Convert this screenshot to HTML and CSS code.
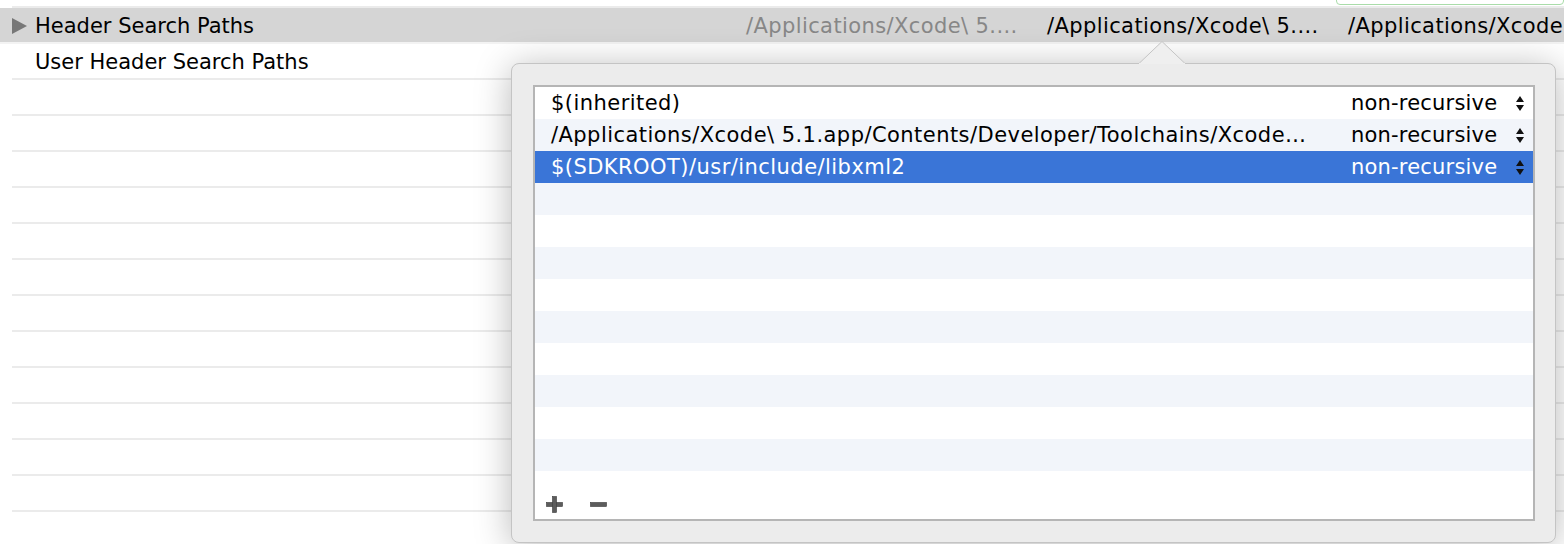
FILE: index.html
```html
<!DOCTYPE html>
<html lang="en">
<head>
    <meta charset="UTF-8">
    <title>Build Settings - Search Paths</title>
    <link rel="stylesheet" href="styles.css">
</head>
<body>
    <div class="settings">
        <div class="setting-row prev-row">
            <div class="filter-field"></div>
        </div>
        <div class="setting-row header-row">
            <div class="disclosure"></div>
            <div class="setting-name">Header Search Paths</div>
            <div class="setting-value inherited">/Applications/Xcode\ 5....</div>
            <div class="setting-value">/Applications/Xcode\ 5....</div>
            <div class="setting-value last">/Applications/Xcode</div>
        </div>
        <div class="setting-row">
            <div class="setting-name">User Header Search Paths</div>
        </div>
        <div class="setting-row"></div>
        <div class="setting-row"></div>
        <div class="setting-row"></div>
        <div class="setting-row"></div>
        <div class="setting-row"></div>
        <div class="setting-row"></div>
        <div class="setting-row"></div>
        <div class="setting-row"></div>
        <div class="setting-row"></div>
        <div class="setting-row"></div>
        <div class="setting-row"></div>
        <div class="setting-row"></div>
    </div>

    <div class="popover">
        <svg class="popover-arrow" width="46" height="23" viewBox="0 0 46 23">
            <path d="M0 22.5 L23 0.5 L46 22.5" fill="#efefef" stroke="#c4c4c4" stroke-width="1"/>
            <rect x="0" y="22" width="46" height="2" fill="#efefef"/>
        </svg>
        <div class="path-table">
            <div class="path-row">
                <div class="path-text">$(inherited)</div>
                <div class="path-recursion">non-recursive</div>
                <svg class="stepper" width="8" height="15" viewBox="0 0 8 15"><path d="M4 0 L8 6 L0 6 Z M0 9 L8 9 L4 15 Z" fill="#111"/></svg>
            </div>
            <div class="path-row striped">
                <div class="path-text">/Applications/Xcode\ 5.1.app/Contents/Developer/Toolchains/Xcode…</div>
                <div class="path-recursion">non-recursive</div>
                <svg class="stepper" width="8" height="15" viewBox="0 0 8 15"><path d="M4 0 L8 6 L0 6 Z M0 9 L8 9 L4 15 Z" fill="#111"/></svg>
            </div>
            <div class="path-row selected">
                <div class="path-text">$(SDKROOT)/usr/include/libxml2</div>
                <div class="path-recursion">non-recursive</div>
                <svg class="stepper" width="8" height="15" viewBox="0 0 8 15"><path d="M4 0 L8 6 L0 6 Z M0 9 L8 9 L4 15 Z" fill="#111"/></svg>
            </div>
            <div class="path-row striped"></div>
            <div class="path-row"></div>
            <div class="path-row striped"></div>
            <div class="path-row"></div>
            <div class="path-row striped"></div>
            <div class="path-row"></div>
            <div class="path-row striped"></div>
            <div class="path-row"></div>
            <div class="path-row striped"></div>
            <div class="table-footer">
                <svg class="footer-button" width="17" height="17" viewBox="0 0 17 17">
                    <rect x="0.5" y="6.5" width="16" height="4" fill="#5c5c5c" stroke="#3a3a3a" stroke-width="0.6"/>
                    <rect x="6.5" y="0.5" width="4" height="16" fill="#5c5c5c" stroke="#3a3a3a" stroke-width="0.6"/>
                    <rect x="6.8" y="6.8" width="3.4" height="3.4" fill="#5c5c5c"/>
                </svg>
                <svg class="footer-button" width="17" height="17" viewBox="0 0 17 17">
                    <rect x="0.5" y="6.5" width="16" height="4" fill="#5c5c5c" stroke="#3a3a3a" stroke-width="0.6"/>
                </svg>
            </div>
        </div>
    </div>
</body>
</html>
```

FILE: styles.css
```css
body {
    margin: 0;
    padding: 0;
    background-color: #ffffff;
    color: #000000;
    font-family: "DejaVu Sans", "Liberation Sans", sans-serif;
    font-size: 21px;
    width: 1564px;
    height: 544px;
    overflow: hidden;
    position: relative;
}

.settings {
    margin-top: -28px;
    margin-left: 12px;
}

.setting-row {
    height: 36px;
    box-sizing: border-box;
    padding-top: 1px;
    border-bottom: 2px solid #ebebeb;
    display: flex;
    align-items: center;
    white-space: nowrap;
    overflow: hidden;
}

.prev-row {
    justify-content: flex-end;
    align-items: flex-end;
}

.filter-field {
    width: 226px;
    height: 20px;
    margin-bottom: 1px;
    border: 1px solid #a9dca9;
    border-radius: 4px;
    background-color: #ffffff;
}

.header-row {
    margin-left: -12px;
    padding-left: 12px;
    background-color: #d5d5d5;
    border-bottom-color: #f3f3f3;
}

.disclosure {
    flex-shrink: 0;
    width: 0;
    height: 0;
    border-left: 15px solid #777777;
    border-top: 8px solid transparent;
    border-bottom: 8px solid transparent;
    margin-right: 8px;
}

.setting-name {
    padding-left: 23px;
}

.header-row .setting-name {
    padding-left: 0;
    width: 711px;
    flex-shrink: 0;
}

.setting-value {
    width: 301px;
    flex-shrink: 0;
    letter-spacing: 0.4px;
}

.setting-value.last {
    width: auto;
}

.setting-value.inherited {
    color: #878787;
}

.popover {
    position: absolute;
    left: 511px;
    top: 63px;
    width: 1045px;
    height: 480px;
    box-sizing: border-box;
    padding: 21px 20px 21px 21px;
    background-color: #ececec;
    border: 1px solid #c4c4c4;
    border-radius: 8px;
    box-shadow: 0 4px 36px rgba(0, 0, 0, 0.28);
}

.popover-arrow {
    position: absolute;
    left: 627px;
    top: -23px;
}

.path-table {
    height: 100%;
    box-sizing: border-box;
    border: 2px solid #b5b5b5;
    background-color: #ffffff;
    display: flex;
    flex-direction: column;
}

.path-row {
    height: 32px;
    flex-shrink: 0;
    display: flex;
    align-items: center;
    padding: 0 9px 0 16px;
    white-space: nowrap;
}

.path-row.striped {
    background-color: #f2f5fa;
}

.path-row.selected {
    background-color: #3a75d7;
    color: #ffffff;
}

.path-text {
    flex: 1;
    min-width: 0;
    margin-right: 32px;
    letter-spacing: 0.45px;
}

.path-recursion {
    width: 165px;
    letter-spacing: 0.2px;
}

.stepper {
    display: block;
}

.table-footer {
    flex: 1;
    display: flex;
    align-items: flex-end;
    gap: 27px;
    padding: 0 0 6px 11px;
}
```
